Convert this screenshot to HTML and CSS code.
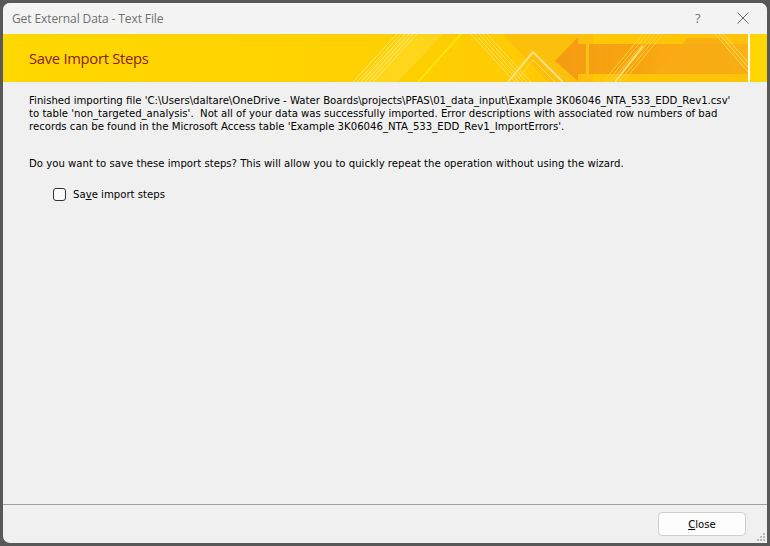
FILE: index.html
```html
<!DOCTYPE html>
<html>
<head>
<meta charset="utf-8">
<link rel="stylesheet" href="styles.css">
</head>
<body>
<div class="window">
  <div class="titlebar">
    <span class="title">Get External Data - Text File</span>
    <span class="tb-help">?</span>
    <span class="tb-close">
      <svg width="12" height="12" viewBox="0 0 12 12"><path d="M0.5 0.5 L11.5 11.5 M11.5 0.5 L0.5 11.5" stroke="#6a6a6a" stroke-width="1" fill="none"/></svg>
    </span>
  </div>
  <div class="banner">
    <svg class="banner-art" width="764" height="48" viewBox="0 0 764 48" preserveAspectRatio="none">
      <defs>
        <linearGradient id="bg" x1="0" y1="0" x2="1" y2="0">
          <stop offset="0" stop-color="#ffd800"/>
          <stop offset="0.5" stop-color="#ffd000"/>
          <stop offset="1" stop-color="#ffc20a"/>
        </linearGradient>
        <linearGradient id="or" x1="0" y1="0" x2="1" y2="0">
          <stop offset="0" stop-color="#f59a12"/>
          <stop offset="1" stop-color="#fbb414"/>
        </linearGradient>
      </defs>
      <rect x="0" y="0" width="745" height="48" fill="url(#bg)"/>
      <polygon points="400,0 440,0 395,48 355,48" fill="#ffe24a" opacity="0.35"/>
      <g stroke="#ffe98a" stroke-width="1" opacity="0.8">
        <line x1="394" y1="0" x2="350" y2="48"/>
        <line x1="398" y1="0" x2="354" y2="48"/>
        <line x1="402" y1="0" x2="358" y2="48"/>
        <line x1="406" y1="0" x2="362" y2="48"/>
        <line x1="410" y1="0" x2="366" y2="48"/>
        <line x1="414" y1="0" x2="370" y2="48"/>
      </g>
      <line x1="458" y1="0" x2="415" y2="48" stroke="#ffe600" stroke-width="2"/>
      <g stroke="#ffe27a" stroke-width="1" opacity="0.8">
        <line x1="468" y1="0" x2="512" y2="48"/>
        <line x1="472" y1="0" x2="516" y2="48"/>
        <line x1="476" y1="0" x2="520" y2="48"/>
        <line x1="480" y1="0" x2="524" y2="48"/>
        <line x1="484" y1="0" x2="528" y2="48"/>
      </g>
      <polygon points="500,0 590,0 590,48 545,48" fill="#fbbb10" opacity="0.7"/>
      <polyline points="505,48 530,18 560,48" fill="none" stroke="#ffe080" stroke-width="2"/>
      <polyline points="512,48 530,26 552,48" fill="none" stroke="#ffe080" stroke-width="1" opacity="0.7"/>
      <polygon points="552,27 575,3 575,10 745,10 745,40 575,40 575,47" fill="url(#or)"/>
      <rect x="583" y="10" width="3" height="30" fill="#ffc21a"/>
      <polygon points="650,40 685,4 718,4 745,36 745,40" fill="#f8ab14" opacity="0.8"/>
      <g stroke="#ffd040" stroke-width="1" opacity="0.9">
        <line x1="640" y1="0" x2="600" y2="48"/>
        <line x1="644" y1="0" x2="604" y2="48"/>
        <line x1="648" y1="0" x2="608" y2="48"/>
        <line x1="652" y1="0" x2="612" y2="48"/>
        <line x1="656" y1="0" x2="616" y2="48"/>
        <line x1="660" y1="0" x2="620" y2="48"/>
      </g>
      <line x1="640" y1="12" x2="612" y2="48" stroke="#ffe070" stroke-width="2"/>
      <g stroke="#ffe070" stroke-width="1" opacity="0.8">
        <line x1="712" y1="0" x2="745" y2="38"/>
        <line x1="716" y1="0" x2="745" y2="33"/>
        <line x1="720" y1="0" x2="745" y2="28"/>
      </g>
      <rect x="745" y="0" width="2" height="48" fill="#ffffff"/>
      <rect x="747" y="0" width="17" height="48" fill="#ffd700"/>
    </svg>
    <span class="banner-title">Save Import Steps</span>
  </div>
  <div class="content">
    <p class="msg">Finished importing file 'C:\Users\daltare\OneDrive - Water Boards\projects\PFAS\01_data_input\Example 3K06046_NTA_533_EDD_Rev1.csv'<br>to table 'non_targeted_analysis'.&nbsp; Not all of your data was successfully imported. Error descriptions with associated row numbers of bad<br>records can be found in the Microsoft Access table 'Example 3K06046_NTA_533_EDD_Rev1_ImportErrors'.</p>
    <p class="question">Do you want to save these import steps? This will allow you to quickly repeat the operation without using the wizard.</p>
    <label class="check">
      <span class="box"></span>
      <span>Sa<u>v</u>e import steps</span>
    </label>
  </div>
  <div class="footer">
    <button class="btn"><u>C</u>lose</button>
    <span class="grip">
      <svg width="8" height="8" viewBox="0 0 8 8" fill="#b8b8b8">
        <rect x="6" y="0" width="2" height="2"/>
        <rect x="3" y="3" width="2" height="2"/><rect x="6" y="3" width="2" height="2"/>
        <rect x="0" y="6" width="2" height="2"/><rect x="3" y="6" width="2" height="2"/><rect x="6" y="6" width="2" height="2"/>
      </svg>
    </span>
  </div>
</div>
</body>
</html>
```
FILE: styles.css
```css
html, body {
  margin: 0;
  padding: 0;
  background: #585858;
  width: 770px;
  height: 546px;
  overflow: hidden;
}
body {
  padding: 3px;
  box-sizing: border-box;
}
.window {
  width: 764px;
  height: 540px;
  background: #f0f0f0;
  border-radius: 7px 7px 0 7px;
  overflow: hidden;
  display: flex;
  flex-direction: column;
  font-family: "DejaVu Sans", sans-serif;
}
.titlebar {
  height: 31px;
  background: #f3f3f3;
  display: flex;
  align-items: center;
  position: relative;
  flex: none;
}
.title {
  margin-left: 9px;
  font-family: "Open Sans", sans-serif;
  font-size: 12px;
  color: #707070;
  letter-spacing: -0.1px;
}
.tb-help {
  position: absolute;
  left: 692px;
  top: 6px;
  font-family: "Open Sans", sans-serif;
  font-size: 13px;
  color: #777;
}
.tb-close {
  position: absolute;
  left: 734px;
  top: 9px;
  width: 12px;
  height: 12px;
}
.tb-close svg { display: block; }
.banner {
  height: 48px;
  flex: none;
  position: relative;
  display: flex;
  align-items: center;
  border-bottom: 1px solid #e8eef4;
}
.banner-art {
  position: absolute;
  left: 0;
  top: 0;
}
.banner-title {
  position: relative;
  margin-left: 26px;
  margin-top: 0;
  font-family: "Open Sans", sans-serif;
  font-size: 14.8px;
  color: #8a1c00;
  letter-spacing: -0.3px;
}
.content {
  flex: 1;
  padding: 11px 10px 0 26px;
  font-size: 10.15px;
  color: #000;
  border-bottom: 1px solid #a0a0a0;
  white-space: nowrap;
}
.msg {
  margin: 0;
  line-height: 13px;
}
.question {
  margin: 24px 0 0 0;
  line-height: 13px;
}
.check {
  display: flex;
  align-items: center;
  margin: 18px 0 0 24px;
  gap: 7px;
}
.box {
  width: 11px;
  height: 11px;
  border: 1px solid #333;
  border-radius: 3px;
  background: #fafafa;
}
.footer {
  height: 38px;
  flex: none;
  position: relative;
  display: flex;
  justify-content: flex-end;
  align-items: flex-start;
}
.btn {
  margin: 7px 21px 0 0;
  width: 88px;
  height: 24px;
  border: 1px solid #cfcfcf;
  border-radius: 4px;
  background: #fdfdfd;
  font-family: "DejaVu Sans", sans-serif;
  font-size: 10.15px;
  color: #000;
  padding: 0;
}
.grip {
  position: absolute;
  right: 2px;
  bottom: 2px;
  width: 8px;
  height: 8px;
}
.grip svg { display: block; }
```
